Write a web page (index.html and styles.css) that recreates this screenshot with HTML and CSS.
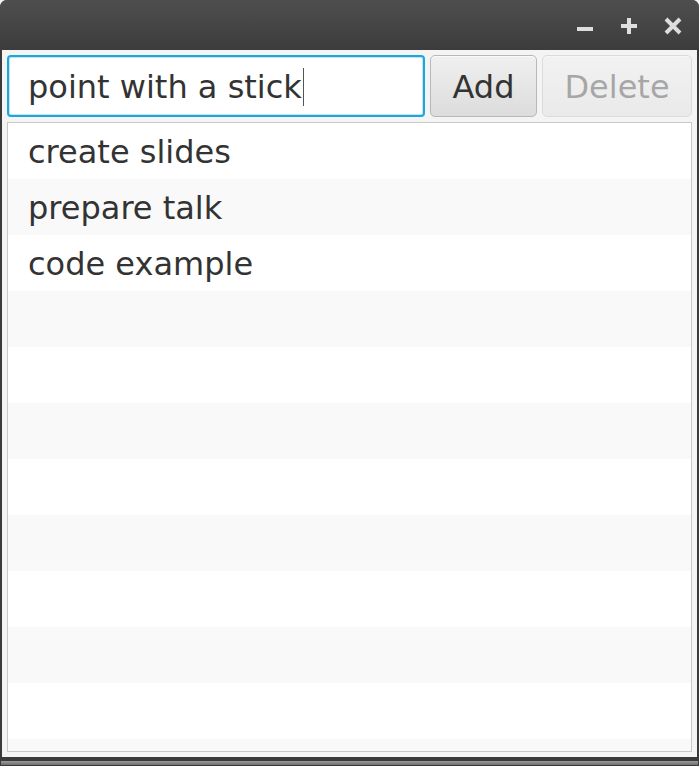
FILE: index.html
```html
<!DOCTYPE html>
<html>
<head>
<meta charset="utf-8">
<link rel="stylesheet" href="styles.css">
</head>
<body>
<div class="window">
  <div class="titlebar">
    <div class="controls">
      <svg class="ctl" width="18" height="18" viewBox="0 0 18 18"><rect x="1" y="10" width="16" height="4" fill="#dedede"/></svg>
      <svg class="ctl" width="18" height="18" viewBox="0 0 18 18"><rect x="1" y="7" width="16" height="4" fill="#dedede"/><rect x="7" y="1" width="4" height="16" fill="#dedede"/></svg>
      <svg class="ctl" width="18" height="18" viewBox="0 0 18 18"><path d="M2 2 L16 16 M16 2 L2 16" stroke="#dedede" stroke-width="4" stroke-linecap="butt"/></svg>
    </div>
  </div>
  <div class="content">
    <div class="toolbar">
      <div class="field"><span class="value">point with a stick</span><span class="caret"></span></div>
      <button class="btn add">Add</button>
      <button class="btn delete" disabled>Delete</button>
    </div>
    <div class="list">
      <div class="row">create slides</div>
      <div class="row">prepare talk</div>
      <div class="row">code example</div>
      <div class="row"></div>
      <div class="row"></div>
      <div class="row"></div>
      <div class="row"></div>
      <div class="row"></div>
      <div class="row"></div>
      <div class="row"></div>
      <div class="row"></div>
      <div class="row"></div>
    </div>
  </div>
  <div class="bottom"><div class="grip"></div></div>
</div>
</body>
</html>
```

FILE: styles.css
```css
html, body {
  margin: 0;
  padding: 0;
  background: #f4f4f4;
}
.window {
  width: 699px;
  height: 766px;
  display: flex;
  flex-direction: column;
  background: #3a3a3a;
  border-radius: 7px 7px 0 0;
  overflow: hidden;
  font-family: "DejaVu Sans", sans-serif;
}
.titlebar {
  height: 50px;
  flex: none;
  background: linear-gradient(#4e4e4e, #3c3c3c);
  display: flex;
  justify-content: flex-end;
  align-items: flex-start;
}
.controls {
  display: flex;
  gap: 26px;
  margin: 17px 17px 0 0;
}
.ctl { display: block; }
.content {
  flex: none;
  height: 707px;
  margin: 0 2px;
  background: #f4f4f4;
  padding: 5px;
  box-sizing: border-box;
  display: flex;
  flex-direction: column;
  gap: 5px;
}
.toolbar {
  display: flex;
  gap: 5px;
  height: 62px;
  flex: none;
}
.field {
  width: 418px;
  box-sizing: border-box;
  border: 2px solid #1ba7d9;
  border-radius: 4px;
  background: #fff;
  box-shadow: inset 0 0 0 1px #bfe4f3;
  display: flex;
  align-items: center;
  padding: 2px 0 0 19px;
  font-size: 32px;
  color: #333;
}
.caret {
  display: inline-block;
  width: 1px;
  height: 38px;
  background: #555;
  margin-left: 1px;
}
.btn {
  box-sizing: border-box;
  border: 1px solid #b8b8b8;
  border-radius: 5px;
  background: linear-gradient(#f0f0f0, #dcdcdc);
  box-shadow: inset 0 1px 0 #fbfbfb;
  font-family: "DejaVu Sans", sans-serif;
  font-size: 32px;
  color: #333;
  padding: 2px 0 0 0;
}
.add { width: 107px; }
.delete { width: 150px; opacity: 0.4; }
.list {
  flex: 1;
  border: 1px solid #c8c8c8;
  background: #fff;
  overflow: hidden;
}
.row {
  height: 56px;
  box-sizing: border-box;
  padding: 2px 0 0 20px;
  display: flex;
  align-items: center;
  font-size: 32px;
  color: #333;
}
.row:nth-child(even) { background: #f9f9f9; }
.bottom {
  flex: 1;
  display: flex;
  flex-direction: column;
  justify-content: flex-end;
  padding-bottom: 1px;
}
.grip {
  height: 4px;
  margin: 0 1px;
  background: linear-gradient(#9a9a9a, #6e6e6e);
}
```
